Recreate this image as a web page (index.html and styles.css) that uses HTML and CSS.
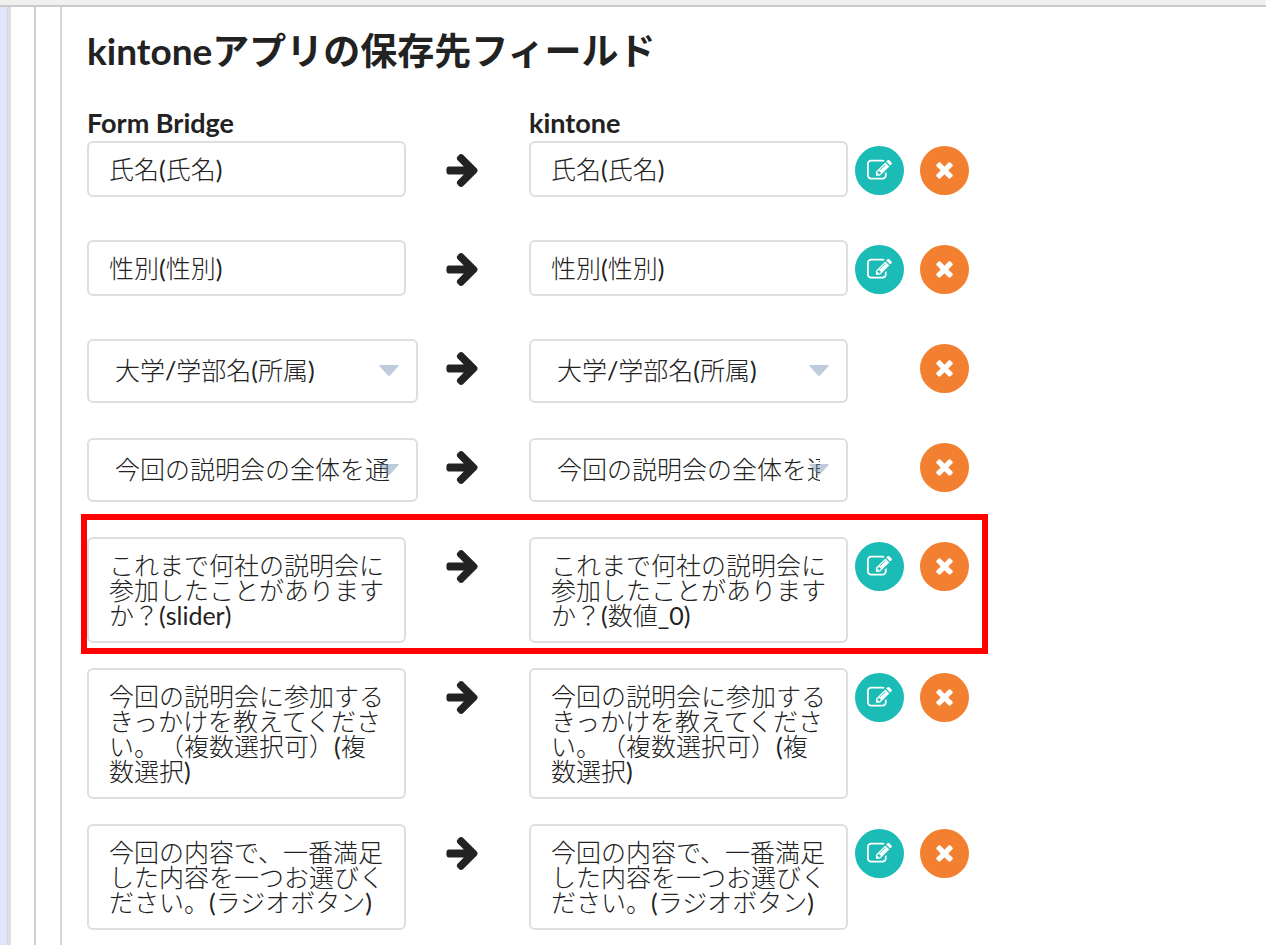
FILE: index.html
```html
<!DOCTYPE html>
<html lang="ja">
<head>
<meta charset="utf-8">
<meta name="viewport" content="width=device-width, initial-scale=1">
<title>kintoneアプリの保存先フィールド</title>
<link rel="stylesheet" href="styles.css">
</head>
<body>
<svg class="sprite" aria-hidden="true">
  <symbol id="arrow" viewBox="128 180 1472 1560"><path d="M1600 960q0 54-37 91l-651 651q-39 37-91 37-51 0-90-37l-75-75q-38-38-38-91t38-91l293-293h-704q-52 0-84.500-37.500t-32.500-90.500v-128q0-53 32.500-90.500t84.500-37.500h704l-293-294q-38-36-38-90t38-90l75-75q38-38 90-38 53 0 91 38l651 651q37 35 37 90z"/></symbol>
  <symbol id="edit" viewBox="0 0 1792 1792"><path d="M888 1184l116-116-152-152-116 116v56h96v96h56zm440-720q-16-16-33 1l-350 350q-17 17-1 33t33-1l350-350q17-17 1-33zm80 594v190q0 119-84.500 203.500t-203.500 84.500h-832q-119 0-203.500-84.500t-84.500-203.500v-832q0-119 84.500-203.500t203.500-84.500h832q63 0 117 25 15 7 18 23 3 17-9 29l-49 49q-14 14-32 8-23-6-45-6h-832q-66 0-113 47t-47 113v832q0 66 47 113t113 47h832q66 0 113-47t47-113v-126q0-13 9-22l64-64q15-15 35-7t20 29zm-96-738l288 288-672 672h-288v-288zm444 132l-92 92-288-288 92-92q28-28 68-28t68 28l152 152q28 28 28 68t-28 68z"/></symbol>
  <symbol id="remove" viewBox="0 66 1792 1792"><path d="M1490 1322q0 40-28 68l-136 136q-28 28-68 28t-68-28l-294-294-294 294q-28 28-68 28t-68-28l-136-136q-28-28-28-68t28-68l294-294-294-294q-28-28-28-68t28-68l136-136q28-28 68-28t68 28l294 294 294-294q28-28 68-28t68 28l136 136q28 28 28 68t-28 68l-294 294 294 294q28 28 28 68z"/></symbol>
  <symbol id="caret" viewBox="0 0 20 11"><path d="M1 0h18q1 0 .6 1L11 10.400q-1 .9-2 0L.4 1Q0 0 1 0z"/></symbol>
</svg>
<div class="topbar"></div>
<div class="frame">
  <div class="rail"></div>
  <div class="panel">
    <main class="content">
      <h1 class="title">kintoneアプリの保存先フィールド</h1>
      <div class="row heads">
        <h2 class="head">Form Bridge</h2>
        <h2 class="head target">kintone</h2>
      </div>
      <div class="rows">
        <div class="row">
          <div class="field">氏名(氏名)</div>
          <svg class="arrow"><use href="#arrow"/></svg>
          <div class="field">氏名(氏名)</div>
          <button class="btn edit" type="button" aria-label="編集"><svg><use href="#edit"/></svg></button>
          <button class="btn remove" type="button" aria-label="削除"><svg><use href="#remove"/></svg></button>
        </div>
        <div class="row">
          <div class="field">性別(性別)</div>
          <svg class="arrow"><use href="#arrow"/></svg>
          <div class="field">性別(性別)</div>
          <button class="btn edit" type="button" aria-label="編集"><svg><use href="#edit"/></svg></button>
          <button class="btn remove" type="button" aria-label="削除"><svg><use href="#remove"/></svg></button>
        </div>
        <div class="row">
          <div class="dropdown"><select aria-label="Form Bridge"><option>大学/学部名(所属)</option></select><svg class="caret"><use href="#caret"/></svg></div>
          <svg class="arrow"><use href="#arrow"/></svg>
          <div class="dropdown"><select aria-label="kintone"><option>大学/学部名(所属)</option></select><svg class="caret"><use href="#caret"/></svg></div>
          <button class="btn remove" type="button" aria-label="削除"><svg><use href="#remove"/></svg></button>
        </div>
        <div class="row">
          <div class="dropdown"><select aria-label="Form Bridge"><option>今回の説明会の全体を通</option></select><svg class="caret"><use href="#caret"/></svg></div>
          <svg class="arrow"><use href="#arrow"/></svg>
          <div class="dropdown"><select aria-label="kintone"><option>今回の説明会の全体を通</option></select><svg class="caret"><use href="#caret"/></svg></div>
          <button class="btn remove" type="button" aria-label="削除"><svg><use href="#remove"/></svg></button>
        </div>
        <div class="row marked">
          <div class="field">これまで何社の説明会に参加したことがありますか？(slider)</div>
          <svg class="arrow"><use href="#arrow"/></svg>
          <div class="field">これまで何社の説明会に参加したことがありますか？(数値_0)</div>
          <button class="btn edit" type="button" aria-label="編集"><svg><use href="#edit"/></svg></button>
          <button class="btn remove" type="button" aria-label="削除"><svg><use href="#remove"/></svg></button>
        </div>
        <div class="row">
          <div class="field">今回の説明会に参加するきっかけを教えてください。（複数選択可）(複数選択)</div>
          <svg class="arrow"><use href="#arrow"/></svg>
          <div class="field">今回の説明会に参加するきっかけを教えてください。（複数選択可）(複数選択)</div>
          <button class="btn edit" type="button" aria-label="編集"><svg><use href="#edit"/></svg></button>
          <button class="btn remove" type="button" aria-label="削除"><svg><use href="#remove"/></svg></button>
        </div>
        <div class="row">
          <div class="field">今回の内容で、一番満足した内容を一つお選びください。(ラジオボタン)</div>
          <svg class="arrow"><use href="#arrow"/></svg>
          <div class="field">今回の内容で、一番満足した内容を一つお選びください。(ラジオボタン)</div>
          <button class="btn edit" type="button" aria-label="編集"><svg><use href="#edit"/></svg></button>
          <button class="btn remove" type="button" aria-label="削除"><svg><use href="#remove"/></svg></button>
        </div>
      </div>
    </main>
  </div>
</div>
</body>
</html>
```

FILE: styles.css
```css
*,
*::after {
  box-sizing: border-box;
}

body {
  margin: 0;
  min-height: 100vh;
  display: flex;
  flex-direction: column;
  background: #fff;
  color: #222;
  font-family: Lato, "Noto Sans CJK JP Light", "Noto Sans CJK JP", sans-serif;
  font-size: 25px;
  line-height: 25px;
  text-spacing-trim: space-all;
}

.sprite {
  position: absolute;
  width: 0;
  height: 0;
}

.topbar {
  height: 7px;
  flex: none;
  background: #f0f0f0;
  border-bottom: 2px solid #cbcbcb;
}

.frame {
  flex: 1;
  display: flex;
}

.rail {
  width: 11px;
  flex: none;
  background: linear-gradient(to right, #e2e8fb 6px, #cdd3e6 8px);
  border-right: 3px solid #dedede;
}

.panel {
  flex: 1;
  min-width: 0;
  margin-left: 23px;
  border-left: 2px solid #cfcfcf;
  padding-left: 24px;
  display: flex;
}

.content {
  flex: 1;
  min-width: 0;
  border-left: 2px solid #d8d8d8;
  padding: 20px 25px 15px;
}

.title {
  margin: 0;
  font-family: Lato, "Noto Sans CJK JP", sans-serif;
  font-size: 37px;
  line-height: 48px;
  font-weight: 700;
}

.heads {
  margin-top: 30px;
}

.head {
  margin: 0;
  font-size: 27px;
  line-height: 36px;
  font-weight: 700;
}

.target {
  grid-column: 3;
}

.rows {
  display: grid;
  gap: 25px;
}

.row {
  position: relative;
  display: grid;
  grid-template-columns: minmax(0, 331px) 111px minmax(0, 319px) 49px 49px;
  align-items: start;
}

.rows .row {
  min-height: 74px;
}

.field {
  max-width: 319px;
  border: 2px solid #dedede;
  border-radius: 6px;
  padding: 14px 20px 13px;
  overflow-wrap: anywhere;
}

.arrow {
  width: 32px;
  height: 33px;
  margin: 13px 0 0 28px;
  fill: #222;
}

.dropdown {
  position: relative;
}

.dropdown select {
  appearance: none;
  display: block;
  width: 100%;
  height: 64px;
  margin: 0;
  padding: 0 26px 2px;
  border: 2px solid #dedede;
  border-radius: 6px;
  background: #fff;
  color: inherit;
  font: inherit;
  text-overflow: clip;
}

.caret {
  position: absolute;
  top: 26px;
  right: 19px;
  width: 20px;
  height: 11px;
  fill: #718db0;
  opacity: 0.45;
  pointer-events: none;
}

.btn {
  width: 49px;
  height: 49px;
  margin: 5px 0 0;
  padding: 0;
  border: 0;
  border-radius: 50%;
  display: grid;
  place-items: center;
}

.btn svg {
  width: 25px;
  height: 25px;
  fill: #fff;
}

.edit {
  grid-column: 4;
  margin-left: 7px;
  background: #1abcb5;
}

.remove {
  grid-column: 5;
  margin-left: 23px;
  background: #f38031;
}

.marked::after {
  content: "";
  position: absolute;
  top: -23px;
  bottom: -11px;
  left: -6px;
  width: 907px;
  border: 6px solid #f00;
  pointer-events: none;
}
```
